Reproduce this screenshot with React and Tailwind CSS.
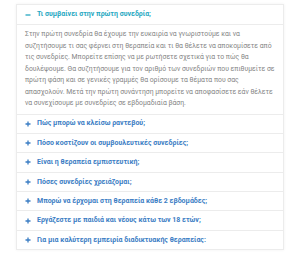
import React from "react";

const items = [
  "Πώς μπορώ να κλείσω ραντεβού;",
  "Πόσο κοστίζουν οι συμβουλευτικές συνεδρίες;",
  "Είναι η θεραπεία εμπιστευτική;",
  "Πόσες συνεδρίες χρειάζομαι;",
  "Μπορώ να έρχομαι στη θεραπεία κάθε 2 εβδομάδες;",
  "Εργάζεστε με παιδιά και νέους κάτω των 18 ετών;",
  "Για μια καλύτερη εμπειρία διαδικτυακής θεραπείας:",
];

function Plus() {
  return (
    <svg width="6" height="6" viewBox="0 0 6 6" className="shrink-0">
      <path d="M3 0.5V5.5M0.5 3H5.5" stroke="#3b7dc4" strokeWidth="1.3" />
    </svg>
  );
}

export default function App() {
  return (
    <div className="w-[300px] h-[261px] bg-white pt-1 px-4" style={{ fontFamily: "Roboto, 'Open Sans', sans-serif" }}>
      <div className="border border-[#ececec] shadow-[0_0_3px_rgba(0,0,0,0.06)]">
        <div className="h-[20px] flex items-center gap-[6px] pl-[8px] border-b border-[#ececec] text-[#27a8c2] text-[7px] font-bold">
          <svg width="6" height="6" viewBox="0 0 6 6" className="shrink-0">
            <path d="M0.5 3H5.5" stroke="#27a8c2" strokeWidth="1.3" />
          </svg>
          <span>Τι συμβαίνει στην πρώτη συνεδρία;</span>
        </div>
        <p className="pl-[8px] pr-[5px] pt-[4px] pb-[4px] text-[6.85px] leading-[11.5px] text-[#858585]">
          Στην πρώτη συνεδρία θα έχουμε την ευκαιρία να γνωριστούμε και να συζητήσουμε τι σας φέρνει στη θεραπεία και τι θα θέλετε να αποκομίσετε από τις συνεδρίες. Μπορείτε επίσης να με ρωτήσετε σχετικά για το πώς θα δουλέψουμε. Θα συζητήσουμε για τον αριθμό των συνεδριών που επιθυμείτε σε πρώτη φάση και σε γενικές γραμμές θα ορίσουμε τα θέματα που σας απασχολούν. Μετά την πρώτη συνάντηση μπορείτε να αποφασίσετε εάν θέλετε να συνεχίσουμε με συνεδρίες σε εβδομαδιαία βάση.
        </p>
        {items.map((t) => (
          <div key={t} className="h-[19.4px] flex items-center gap-[6px] pl-[8px] border-t border-[#ececec] text-[#3b7dc4] text-[7px] font-bold">
            <Plus />
            <span>{t}</span>
          </div>
        ))}
      </div>
    </div>
  );
}
